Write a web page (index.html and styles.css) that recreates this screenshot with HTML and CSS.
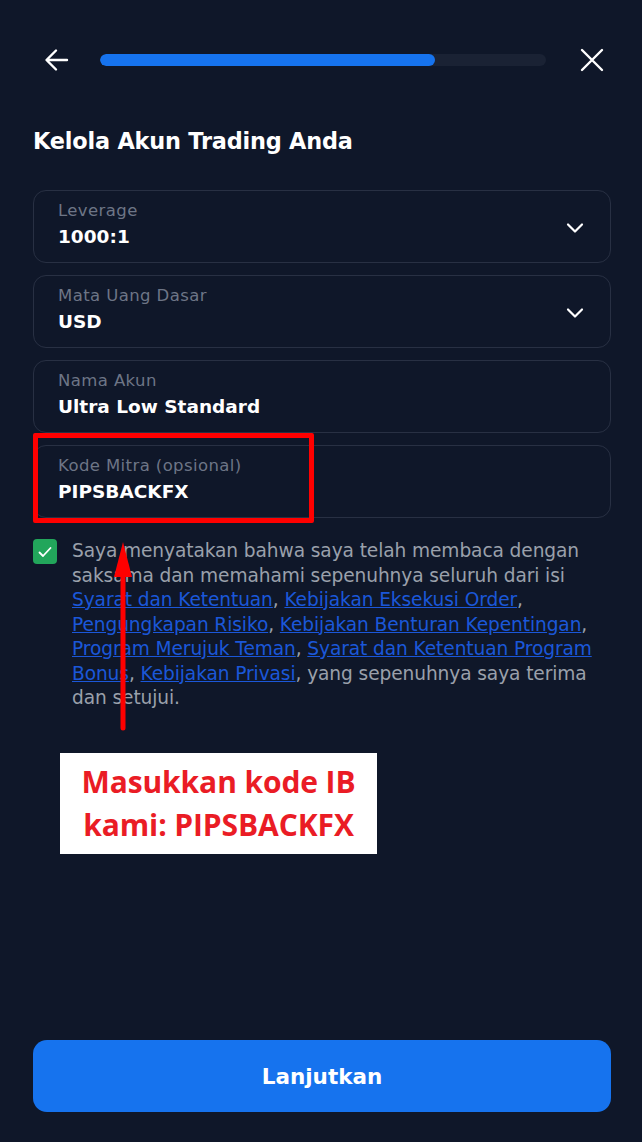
FILE: index.html
```html
<!DOCTYPE html>
<html lang="id">
<head>
  <meta charset="UTF-8">
  <title>Kelola Akun Trading Anda</title>
  <link rel="stylesheet" href="styles.css">
</head>
<body>
  <div class="screen">
    <div class="topbar">
      <button class="icon-btn" aria-label="Kembali">
        <svg width="28" height="28" viewBox="0 0 28 28" fill="none" stroke="#fff" stroke-width="2.4" stroke-linecap="round" stroke-linejoin="round">
          <path d="M24 14H4M13 4.5L3.5 14L13 23.5"/>
        </svg>
      </button>
      <div class="progress"><div class="progress-fill" style="width: 75%"></div></div>
      <button class="icon-btn" aria-label="Tutup">
        <svg width="24" height="24" viewBox="0 0 24 24" fill="none" stroke="#fff" stroke-width="2.4" stroke-linecap="round">
          <path d="M2 2L22 22M22 2L2 22"/>
        </svg>
      </button>
    </div>

    <h1 class="title">Kelola Akun Trading Anda</h1>

    <div class="fields">
      <div class="field">
        <div class="field-text">
          <div class="label">Leverage</div>
          <div class="value">1000:1</div>
        </div>
        <svg class="chevron" width="18" height="12" viewBox="0 0 18 12" fill="none" stroke="#fff" stroke-width="2.2" stroke-linecap="round" stroke-linejoin="round">
          <path d="M2 2.5L9 9.5L16 2.5"/>
        </svg>
      </div>
      <div class="field">
        <div class="field-text">
          <div class="label">Mata Uang Dasar</div>
          <div class="value">USD</div>
        </div>
        <svg class="chevron" width="18" height="12" viewBox="0 0 18 12" fill="none" stroke="#fff" stroke-width="2.2" stroke-linecap="round" stroke-linejoin="round">
          <path d="M2 2.5L9 9.5L16 2.5"/>
        </svg>
      </div>
      <div class="field">
        <div class="field-text">
          <div class="label">Nama Akun</div>
          <div class="value">Ultra Low Standard</div>
        </div>
      </div>
      <div class="field field-ref">
        <div class="field-text">
          <div class="label">Kode Mitra (opsional)</div>
          <div class="value">PIPSBACKFX</div>
        </div>
        <div class="mark-box"></div>
      </div>
    </div>

    <div class="agree">
      <span class="check">
        <svg width="16" height="16" viewBox="0 0 16 16" fill="none" stroke="#fff" stroke-width="1.8" stroke-linecap="round" stroke-linejoin="round">
          <path d="M2.5 8.5L6 12L13.5 4"/>
        </svg>
      </span>
      <p class="agree-text">Saya menyatakan bahwa saya telah membaca dengan<br>saksama dan memahami sepenuhnya seluruh dari isi<br><a href="#">Syarat dan Ketentuan</a>, <a href="#">Kebijakan Eksekusi Order</a>,<br><a href="#">Pengungkapan Risiko</a>, <a href="#">Kebijakan Benturan Kepentingan</a>,<br><a href="#">Program Merujuk Teman</a>, <a href="#">Syarat dan Ketentuan Program<br>Bonus</a>, <a href="#">Kebijakan Privasi</a>, yang sepenuhnya saya terima<br>dan setujui.</p>
      <svg class="mark-arrow" width="30" height="190" viewBox="0 0 30 190">
        <path d="M12 186V34" stroke="#ff0000" stroke-width="5" stroke-linecap="round"/>
        <path d="M12 0L21 35H3Z" fill="#ff0000"/>
      </svg>
    </div>

    <div class="note">Masukkan kode IB<br>kami: PIPSBACKFX</div>

    <div class="spacer"></div>

    <button class="primary">Lanjutkan</button>
  </div>
</body>
</html>
```

FILE: styles.css
```css
* {
  box-sizing: border-box;
}

html, body {
  margin: 0;
  height: 100%;
}

body {
  background: #0f1729;
  font-family: "DejaVu Sans", "Noto Sans", sans-serif;
  color: #fff;
}

.screen {
  min-height: 100%;
  display: flex;
  flex-direction: column;
  padding: 0 31px 30px 33px;
}

.topbar {
  display: flex;
  align-items: center;
  height: 120px;
}

.icon-btn {
  background: none;
  border: 0;
  padding: 0;
  display: flex;
  cursor: pointer;
}

.topbar .icon-btn:first-child {
  margin-left: 10px;
  margin-right: 29px;
}

.topbar .icon-btn:last-child {
  margin-left: 34px;
  margin-right: 7px;
}

.progress {
  flex: 1;
  height: 12px;
  border-radius: 6px;
  background: #1a2234;
  overflow: hidden;
}

.progress-fill {
  height: 100%;
  background: #1673ee;
  border-radius: 6px;
}

.title {
  margin: 7px 0 34px;
  font-size: 22.4px;
  font-weight: bold;
  letter-spacing: -0.2px;
  line-height: 29px;
}

.fields {
  display: flex;
  flex-direction: column;
  gap: 12px;
}

.field {
  position: relative;
  display: flex;
  align-items: center;
  height: 73px;
  padding: 0 26px 0 24px;
  border: 1px solid #283043;
  border-radius: 13px;
}

.field-text {
  flex: 1;
}

.label {
  font-size: 16.5px;
  letter-spacing: 0.4px;
  color: #6d7586;
  line-height: 22px;
  margin-top: -2px;
}

.value {
  font-size: 18.5px;
  font-weight: bold;
  line-height: 28px;
  margin-top: 1px;
}

.chevron {
  margin-top: 2px;
}

.mark-box {
  position: absolute;
  left: -1px;
  top: -13px;
  width: 281px;
  height: 90px;
  border: 5px solid #ff0000;
  border-radius: 2px;
}

.agree {
  position: relative;
  display: flex;
  align-items: flex-start;
  gap: 15px;
  margin-top: 20px;
}

.check {
  flex: none;
  width: 24px;
  height: 25px;
  margin-top: 1px;
  border-radius: 4px;
  background: #22a65b;
  display: flex;
  align-items: center;
  justify-content: center;
}

.agree-text {
  margin: 0;
  margin-top: 1px;
  font-size: 18.6px;
  line-height: 24.5px;
  color: #9aa0ab;
  white-space: nowrap;
  letter-spacing: -0.1px;
}

.agree-text a {
  color: #1b57d9;
  text-decoration: underline;
}

.mark-arrow {
  position: absolute;
  left: 78px;
  top: 4px;
}

.note {
  align-self: flex-start;
  margin: 42px 0 0 27px;
  width: 317px;
  height: 101px;
  background: #fff;
  color: #ea1c25;
  font-family: "Open Sans", sans-serif;
  font-weight: 700;
  font-size: 30px;
  letter-spacing: -0.1px;
  line-height: 43px;
  text-align: center;
  padding-top: 7px;
}

.spacer {
  flex: 1;
}

.primary {
  height: 72px;
  border: 0;
  border-radius: 14px;
  background: #1673ee;
  color: #fff;
  font-family: inherit;
  font-size: 21.5px;
  font-weight: bold;
  cursor: pointer;
}
```
